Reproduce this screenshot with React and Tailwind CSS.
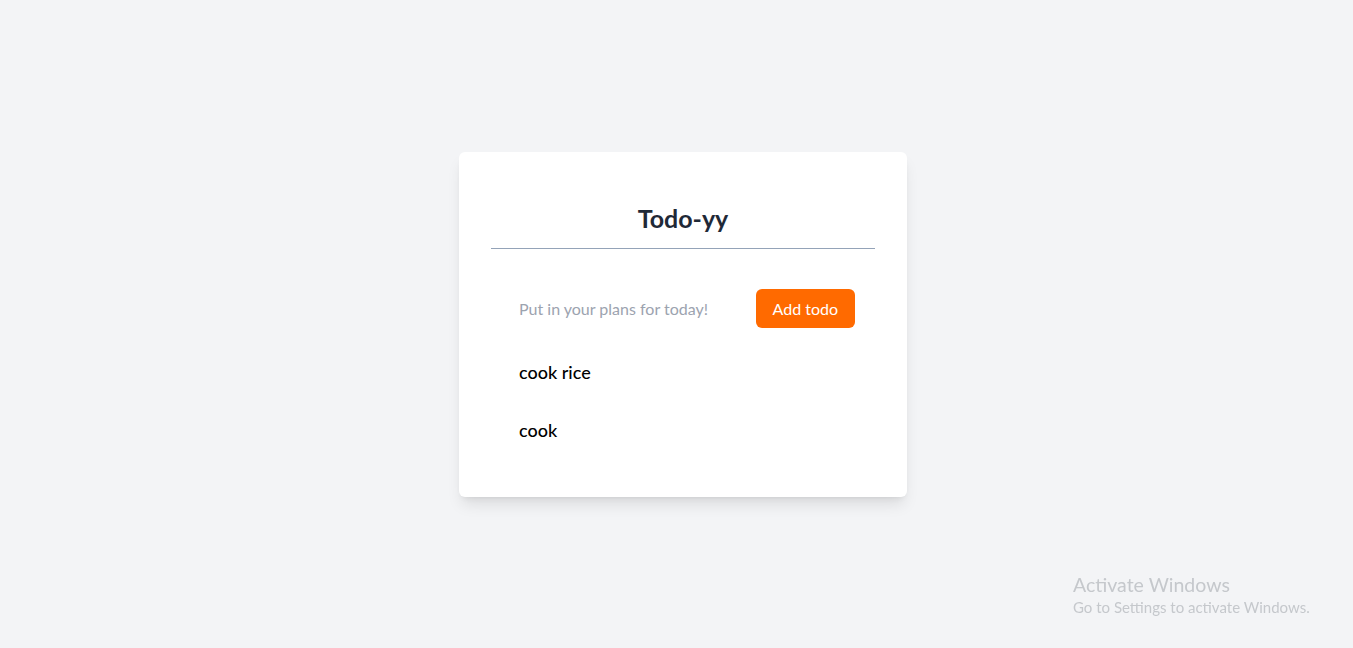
import React, { useState } from "react";

export default function App() {
  const [todos] = useState(["cook rice", "cook"]);

  return (
    <div className="min-h-screen bg-[#f3f4f6] flex items-center justify-center pl-[13px] font-['Segoe_UI','Lato',sans-serif]">
      {/* Card */}
      <div className="w-[448px] bg-white rounded-md shadow-lg pt-[50px] px-8 pb-[38px]">
        <h1 className="text-[25px] leading-8 font-bold text-[#1f2937] text-center pb-[14px] border-b border-[#94a3b8]">
          Todo-yy
        </h1>

        <form className="mt-10 flex items-center justify-between px-5" onSubmit={(e) => e.preventDefault()}>
          <input
            type="text"
            placeholder="Put in your plans for today!"
            className="flex-1 px-2 py-2 text-base text-gray-800 placeholder:text-[#9ca3af] outline-none"
          />
          <button className="bg-[#ff6a00] text-white text-base rounded-md px-[17px] h-[39px]">
            Add todo
          </button>
        </form>

        <ul className="mt-[14px] px-7">
          {todos.map((t) => (
            <li key={t} className="py-[15px] text-lg leading-7 font-medium text-black">
              {t}
            </li>
          ))}
        </ul>
      </div>

      {/* Windows watermark */}
      <div className="fixed left-[1073px] top-[573px] text-[#c5c8cc] leading-tight">
        <p className="text-[19.5px] leading-6">Activate Windows</p>
        <p className="text-[15px] leading-5">Go to Settings to activate Windows.</p>
      </div>
    </div>
  );
}
